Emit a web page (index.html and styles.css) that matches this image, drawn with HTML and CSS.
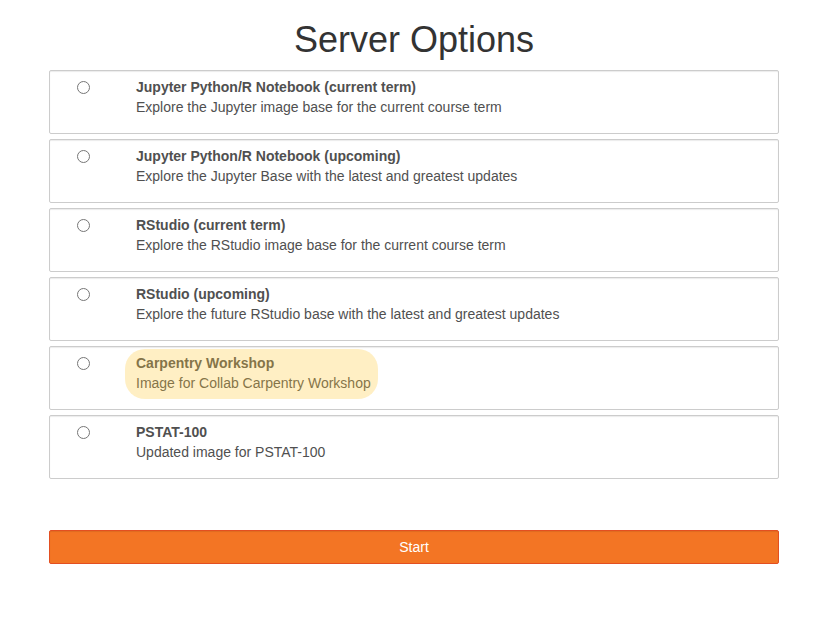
FILE: index.html
```html
<!DOCTYPE html>
<html lang="en">
<head>
<meta charset="utf-8">
<title>Server Options</title>
<link rel="stylesheet" href="styles.css">
</head>
<body>
<main class="page">
  <h1 class="title">Server Options</h1>
  <form class="options">
    <label class="option">
      <input class="radio" type="radio" name="profile">
      <span class="text"><strong>Jupyter Python/R Notebook (current term)</strong><span>Explore the Jupyter image base for the current course term</span></span>
    </label>
    <label class="option">
      <input class="radio" type="radio" name="profile">
      <span class="text"><strong>Jupyter Python/R Notebook (upcoming)</strong><span>Explore the Jupyter Base with the latest and greatest updates</span></span>
    </label>
    <label class="option">
      <input class="radio" type="radio" name="profile">
      <span class="text"><strong>RStudio (current term)</strong><span>Explore the RStudio image base for the current course term</span></span>
    </label>
    <label class="option">
      <input class="radio" type="radio" name="profile">
      <span class="text"><strong>RStudio (upcoming)</strong><span>Explore the future RStudio base with the latest and greatest updates</span></span>
    </label>
    <label class="option">
      <input class="radio" type="radio" name="profile">
      <span class="text highlight"><strong>Carpentry Workshop</strong><span>Image for Collab Carpentry Workshop</span></span>
    </label>
    <label class="option">
      <input class="radio" type="radio" name="profile">
      <span class="text"><strong>PSTAT-100</strong><span>Updated image for PSTAT-100</span></span>
    </label>
    <button class="start" type="button">Start</button>
  </form>
</main>
</body>
</html>
```
FILE: styles.css
```css
* {
  box-sizing: border-box;
}

body {
  margin: 0;
  background: #fff;
  color: #505050;
  font: 14px/20px "Liberation Sans", Arial, sans-serif;
}

.page {
  padding: 20px 37px 0 49px;
}

.title {
  margin: 0 0 10px;
  color: #333;
  font-size: 36px;
  font-weight: 400;
  line-height: 40px;
  text-align: center;
}

.options {
  display: flex;
  flex-direction: column;
  gap: 5px;
}

.option {
  display: flex;
  align-items: flex-start;
  min-height: 64px;
  padding: 6px 27px;
  border: 1px solid #ccc;
  border-radius: 2px;
  box-shadow: inset 0 1px 1px rgba(0, 0, 0, 0.08);
}

.radio {
  width: 13px;
  height: 13px;
  margin: 4px 35px 0 0;
}

.text {
  position: relative;
  display: flex;
  flex-direction: column;
  padding: 0 11px;
}

.highlight::after {
  content: "";
  position: absolute;
  inset: -4px 4px -6px 0;
  border-radius: 20px;
  background: rgba(255, 201, 61, 0.3);
}

.start {
  height: 34px;
  margin-top: 46px;
  border: 1px solid #e34f21;
  border-radius: 2px;
  background: #f37524;
  box-shadow: inset 0 1px 1px rgba(0, 0, 0, 0.08);
  color: #fff;
  font: inherit;
}
```
